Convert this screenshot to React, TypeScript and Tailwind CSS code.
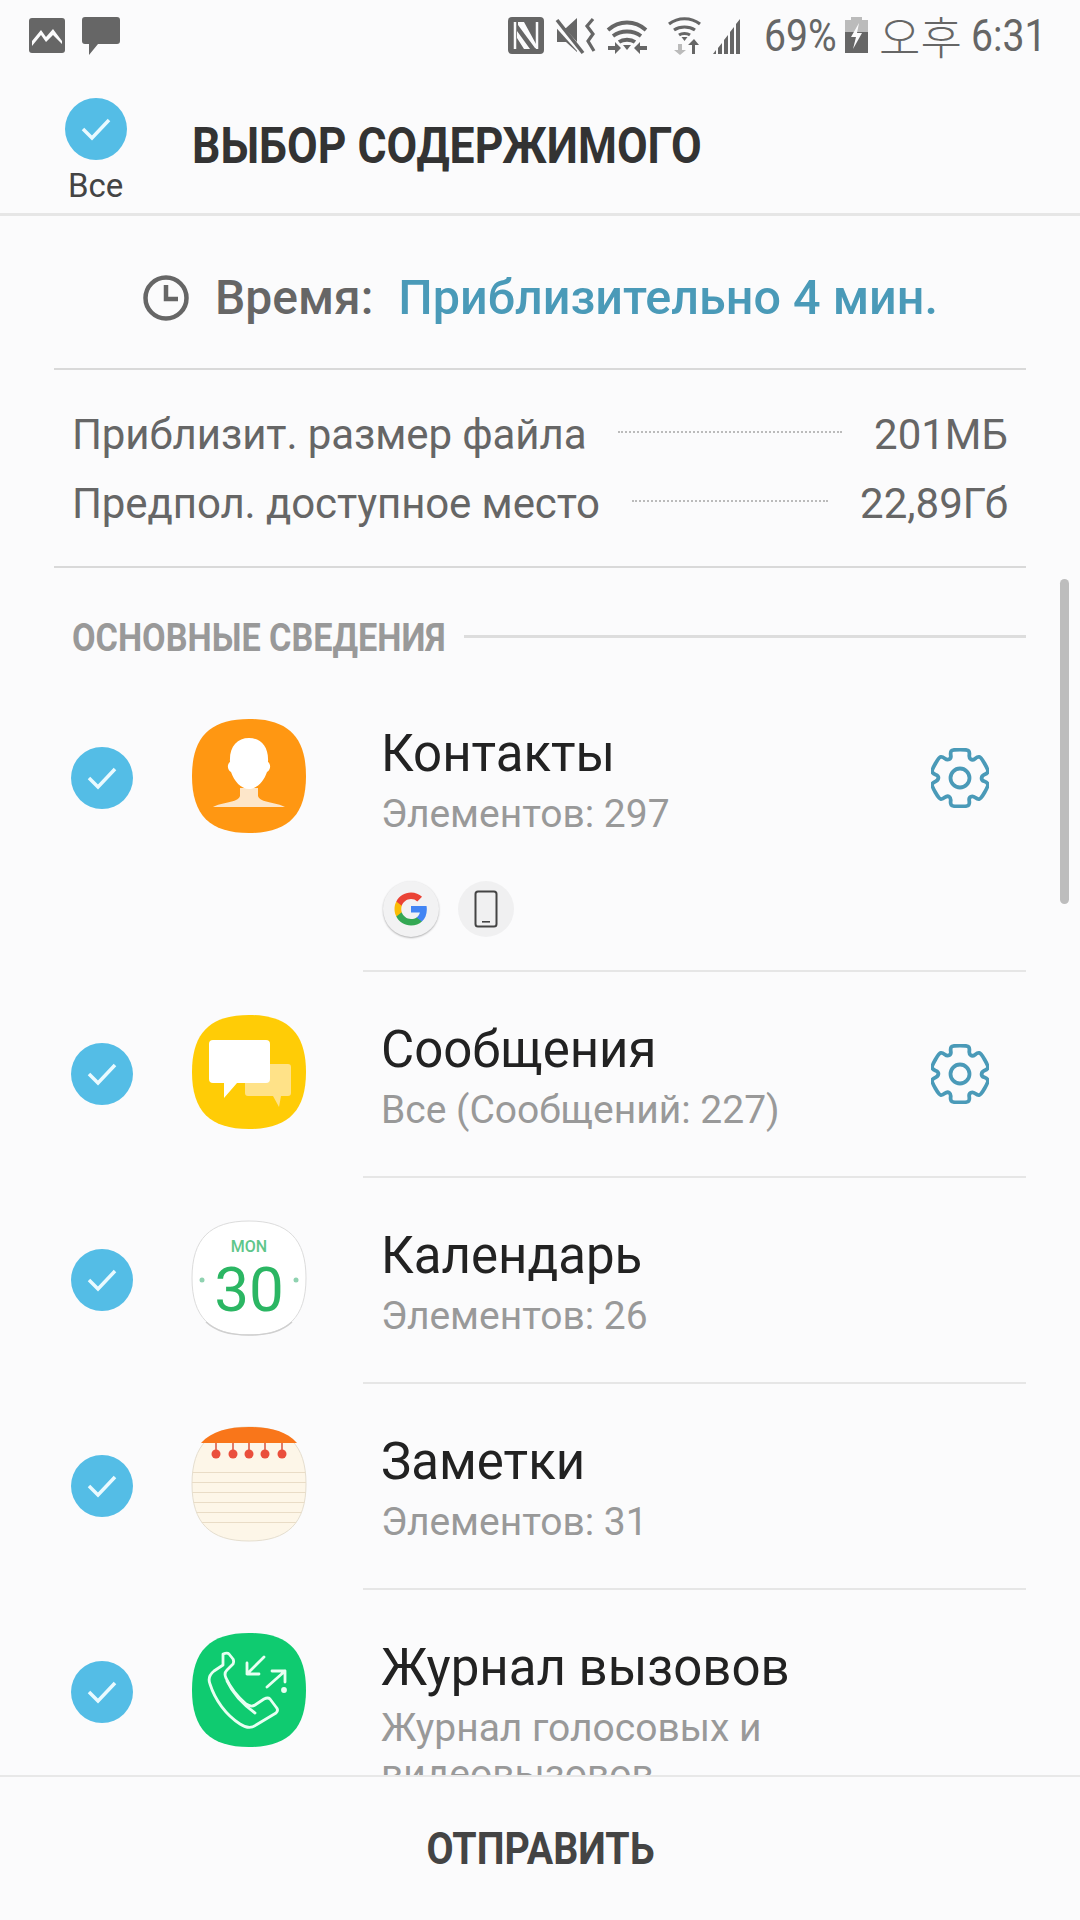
import React from "react";

const SQ = "M57 0C96 0 114 18 114 57C114 96 96 114 57 114C18 114 0 96 0 57C0 18 18 0 57 0Z";

function Check({ size = 62 }: { size?: number }) {
  return (
    <div className="rounded-full bg-[#54bde6] flex items-center justify-center shrink-0" style={{ width: size, height: size }}>
      <svg width="32" height="26" viewBox="0 0 32 26" fill="none">
        <path d="M3 13l9 9L29 4" stroke="#eafaff" strokeWidth="3.500" />
      </svg>
    </div>
  );
}

function gearPath() {
  const cx = 29;
  const cy = 30;
  const pts: [number, number][] = [];
  for (let i = 0; i < 6; i++) {
    const a = -Math.PI / 2 + (i * Math.PI) / 3;
    const add = (d: number, r: number) => pts.push([cx + r * Math.cos(a + d), cy + r * Math.sin(a + d)]);
    add(-0.36, 27.500);
    add(-0.26, 29.500);
    add(0.26, 29.500);
    add(0.36, 27.500);
    add(0.42, 22);
    add(0.627, 21.500);
  }
  const mid = (p: [number, number], q: [number, number]) => [(p[0] + q[0]) / 2, (p[1] + q[1]) / 2];
  const start = mid(pts[pts.length - 1], pts[0]);
  let d = `M${start[0].toFixed(2)} ${start[1].toFixed(2)}`;
  pts.forEach((p, i) => {
    const m = mid(p, pts[(i + 1) % pts.length]);
    d += `Q${p[0].toFixed(2)} ${p[1].toFixed(2)} ${m[0].toFixed(2)} ${m[1].toFixed(2)}`;
  });
  return d + "Z";
}

function Gear() {
  return (
    <svg width="58" height="60" viewBox="0 0 58 60" fill="none" stroke="#4a9ab8" strokeWidth="3.800" strokeLinejoin="round">
      <circle cx="29" cy="30" r="9.500" />
      <path d={gearPath()} />
    </svg>
  );
}

function ContactsIcon() {
  return (
    <svg width="114" height="114" viewBox="0 0 114 114">
      <path d={SQ} fill="#ff9712" />
      <path d="M21 88c8-5 25-4 27-11v-8h18v8c2 7 19 6 27 11Z" fill="#fde6c9" />
      <path d="M57 19c-12 0-20 9-19 24-3 2-3 8 1 10 3 9 10 17 18 17s15-8 18-17c4-2 4-8 1-10 1-15-7-24-19-24Z" fill="#fff" />
    </svg>
  );
}

function MessagesIcon() {
  return (
    <svg width="114" height="114" viewBox="0 0 114 114">
      <path d={SQ} fill="#ffcc06" />
      <path d="M56 49h40a3 3 0 0 1 3 3v26a3 3 0 0 1-3 3h-7l-2 11-6-11H56a3 3 0 0 1-3-3V52a3 3 0 0 1 3-3Z" fill="#ffe288" />
      <path d="M21 25h53a4 4 0 0 1 4 4v35a4 4 0 0 1-4 4H45L32 83V68H21a4 4 0 0 1-4-4V29a4 4 0 0 1 4-4Z" fill="#fff" />
    </svg>
  );
}

function CalendarIcon() {
  return (
    <svg width="114" height="114" viewBox="0 0 114 114" style={{ overflow: "visible" }}>
      <path d={SQ} fill="#fff" stroke="#dcdcdc" strokeWidth="1" />
      <path d="M14 101c10 9 22 13 43 13s33-4 43-13" fill="none" stroke="#cfcfcf" strokeWidth="1.500" />
      <text x="57" y="31" textAnchor="middle" fontFamily="Roboto, sans-serif" fontSize="16" fontWeight="500" fill="#5fc68a">MON</text>
      <text x="57" y="90" textAnchor="middle" fontFamily="Roboto, sans-serif" fontSize="62" fontWeight="400" fill="#2bb663">30</text>
      <circle cx="10" cy="59" r="2.500" fill="#8fd2b0" />
      <circle cx="104" cy="59" r="2.500" fill="#8fd2b0" />
    </svg>
  );
}

function NotesIcon() {
  return (
    <svg width="114" height="114" viewBox="0 0 114 114" style={{ overflow: "visible" }}>
      <defs>
        <clipPath id="notes-clip">
          <path d={SQ} />
        </clipPath>
      </defs>
      <path d={SQ} fill="#fdf6e8" stroke="#e5decf" strokeWidth="1" />
      <path d="M9 16C20 4 36 0 57 0s37 4 48 16Z" fill="#f9761a" />
      {[24, 41, 57, 73, 90].map((x) => (
        <g key={x}>
          <rect x={x - 0.7} y="16" width="1.400" height="10" fill="#d5482f" />
          <circle cx={x} cy="27" r="4.500" fill="#ea4f3c" />
        </g>
      ))}
      <g clipPath="url(#notes-clip)">
        {[45, 55, 65, 75, 85, 95].map((y) => (
          <rect key={y} x="0" y={y} width="114" height="1" fill="#e9dcc6" />
        ))}
      </g>
    </svg>
  );
}

function CallIcon() {
  return (
    <svg width="114" height="114" viewBox="0 0 114 114" fill="none" stroke="#e8fff2" strokeWidth="2.800" strokeLinejoin="round" strokeLinecap="round">
      <path d={SQ} fill="#0fcb70" stroke="none" />
      <g transform="translate(0 4)">
        <path d="M31 28l-9 6c-5 4-6 8-4 13 5 16 16 31 30 40 6 4 11 5 16 1l20-12c2-2 2-4 0-6l-6-8c-2-2-4-1-6 0l-9 6c-3 2-6 1-9-1-9-8-15-15-20-26-2-4-1-6 1-8l6-6c1-2 1-3 0-5l-4-5c-1-1-3-1-6 0Z" />
        <path d="M35 44c6 13 14 22 28 32" />
      </g>
      <path d="M55 41L72 24M55 41V30M55 41h12M75 54l18-16M93 38H80M93 38v11" />
      <circle cx="92" cy="57" r="1.500" fill="#e8fff2" />
    </svg>
  );
}

function GoogleG() {
  return (
    <svg width="36" height="36" viewBox="0 0 48 48">
      <path fill="#4285F4" d="M45.100 24.500c0-1.600-.1-3.100-.4-4.600H24v8.700h11.800c-.5 2.700-2 5-4.400 6.600v5.500h7.100c4.200-3.800 6.600-9.500 6.600-16.200Z" />
      <path fill="#34A853" d="M24 46c5.900 0 10.900-2 14.500-5.300l-7.100-5.500c-2 1.300-4.500 2.100-7.400 2.100-5.700 0-10.500-3.800-12.300-9H4.400v5.700C8 41.100 15.400 46 24 46Z" />
      <path fill="#FBBC05" d="M11.700 28.300c-.4-1.300-.7-2.800-.7-4.300s.3-3 .7-4.300V14H4.400C2.900 17 2 20.400 2 24s.9 7 2.400 10l7.300-5.700Z" />
      <path fill="#EA4335" d="M24 10.700c3.200 0 6.100 1.100 8.400 3.300l6.300-6.300C34.900 4.200 29.900 2 24 2 15.400 2 8 6.900 4.400 14l7.300 5.700c1.800-5.200 6.600-9 12.300-9Z" />
    </svg>
  );
}

function PhoneIcon() {
  return (
    <svg width="24" height="38" viewBox="0 0 24 38" fill="none">
      <rect x="1.500" y="1.500" width="21" height="35" rx="2.500" stroke="#444" strokeWidth="2" />
      <rect x="8" y="31" width="8" height="1.600" fill="#444" />
    </svg>
  );
}

function StatusIcons() {
  return (
    <svg width="242" height="38" viewBox="0 0 242 38" fill="#666" className="shrink-0">
      {/* NFC */}
      <rect x="0" y="0" width="36" height="37" rx="4" />
      <path d="M7 5v27M29 5v27" stroke="#fbfbfc" strokeWidth="2.500" />
      <path d="M10 5h6l12 22v4h-1L10 8ZM9 14l13 18h-6L9 21Z" fill="#fbfbfc" />
      {/* Mute */}
      <path d="M49 11h9l11-10v34l-11-10h-9Z" />
      <path d="M47 5l27 30" stroke="#fbfbfc" strokeWidth="6" />
      <path d="M49 3l26 33" stroke="#666" strokeWidth="3.500" />
      <path d="M85 2l-6 7 6 8-5 7 6 10" fill="none" stroke="#666" strokeWidth="3.200" />
      {/* Wifi with arrows */}
      <g fill="none" stroke="#666" strokeWidth="3.800">
        <path d="M100 13c11-10 27-10 38 0" />
        <path d="M105 19c8-6 20-6 28 0" />
        <path d="M111 25c4-3 12-3 16 0" />
      </g>
      <path d="M119 33l-4-5h8Z" />
      <path d="M100 29h7v-4l6 6-6 6v-4h-7ZM139 29h-7v-4l-6 6 6 6v-4h7Z" />
      {/* Wifi 2 */}
      <g fill="none" stroke="#666" strokeWidth="3.200">
        <path d="M161 7c9-7 22-7 31 0" />
        <path d="M166 13c6-4 15-4 21 0" />
        <path d="M171 18c3-2 8-2 11 0" />
      </g>
      <path d="M176.500 24l-3-4h6Z" />
      <path d="M170 27v6h-4l6 5 6-5h-4v-6Z" fill="#bbb" />
      <path d="M187 37v-9h4l-5-6-6 6h4v9Z" />
      {/* Signal */}
      <path d="M205 37l3-4v4ZM210 37v-6l4-5v11ZM216 37V23l4-5v19ZM222 37V15l4-5v27ZM228 37V7l4-5v35Z" />
    </svg>
  );
}

function Battery() {
  return (
    <svg width="23" height="36" viewBox="0 0 23 36" className="shrink-0">
      <rect x="6" y="0" width="11" height="4" fill="#bbb" />
      <rect x="0" y="3" width="23" height="12" fill="#bbb" />
      <rect x="0" y="15" width="23" height="21" fill="#666" />
      <path d="M14 6L6 20h5l-3 12 9-16h-5Z" fill="#fbfbfc" />
    </svg>
  );
}

type Row = { title: string; sub: string; icon: React.ReactNode; gear?: boolean; chips?: boolean };

const rows: Row[] = [
  { title: "Контакты", sub: "Элементов: 297", icon: <ContactsIcon />, gear: true, chips: true },
  { title: "Сообщения", sub: "Все (Сообщений: 227)", icon: <MessagesIcon />, gear: true },
  { title: "Календарь", sub: "Элементов: 26", icon: <CalendarIcon /> },
  { title: "Заметки", sub: "Элементов: 31", icon: <NotesIcon /> },
  { title: "Журнал вызовов", sub: "Журнал голосовых и видеовызовов", icon: <CallIcon /> },
];

function Item({ r, last }: { r: Row; last: boolean }) {
  return (
    <div className={r.chips ? "h-[296px] relative" : "h-[206px] relative"}>
      <div className="flex h-[206px] items-center">
        <div className="w-[192px] pl-[71px] pt-[3px] shrink-0">
          <Check />
        </div>
        <div className="w-[189px] shrink-0">{r.icon}</div>
        <div className="w-[480px] h-[110px] pt-[3px]">
          <div className="text-[51px] leading-[60px] text-[#222]">{r.title}</div>
          <div className="text-[39px] leading-[46px] text-[#999] mt-[7px]">{r.sub}</div>
        </div>
        {r.gear && (
          <div className="absolute left-[931px] top-[75px]">
            <Gear />
          </div>
        )}
      </div>
      {r.chips && (
        <div className="flex gap-[19px] ml-[383px] mt-[2px]">
          <div className="w-[56px] h-[56px] rounded-full bg-[#f2f2f3] shadow-[0_1px_2px_rgba(0,0,0,0.3)] flex items-center justify-center">
            <GoogleG />
          </div>
          <div className="w-[56px] h-[56px] rounded-full bg-[#f0f0f1] flex items-center justify-center">
            <PhoneIcon />
          </div>
        </div>
      )}
      {!last && <div className="absolute left-[363px] right-[54px] -bottom-[3px] h-[2px] bg-[#e6e6e6]" />}
    </div>
  );
}

export default function App() {
  return (
    <div className="w-[1080px] h-[1920px] bg-[#fbfbfc] flex flex-col overflow-hidden font-['Roboto',sans-serif]">
      <div className="h-[70px] shrink-0 flex items-start pt-[17px] pl-[29px]">
        <svg width="36" height="37" viewBox="0 0 36 37" className="shrink-0">
          <rect x="0" y="1" width="36" height="35" rx="3" fill="#666" />
          <path d="M3 24l9-11 5 7 7-8 9 12v3l-9-9-7 7-5-7-9 11Z" fill="#fbfbfc" />
        </svg>
        <svg className="ml-[17px] shrink-0" width="38" height="38" viewBox="0 0 38 38" fill="#666">
          <path d="M3 0h32a3 3 0 0 1 3 3v21a3 3 0 0 1-3 3H16l-9 11V27H3a3 3 0 0 1-3-3V3a3 3 0 0 1 3-3Z" />
        </svg>
        <div className="ml-[388px] shrink-0">
          <StatusIcons />
        </div>
        <div className="ml-[14px] w-[72px] shrink-0 text-[45px] leading-[38px] text-[#666] scale-x-[0.87] origin-left whitespace-nowrap">
          69%
        </div>
        <div className="ml-[9px] shrink-0">
          <Battery />
        </div>
        <div className="ml-[11px] w-[81px] shrink-0 text-[45px] leading-[38px] text-[#666] whitespace-nowrap font-['Noto_Sans_CJK_KR',sans-serif] font-light">
          오후
        </div>
        <div className="ml-[11px] shrink-0 text-[45px] leading-[38px] text-[#666] scale-x-[0.87] origin-left whitespace-nowrap">
          6:31
        </div>
      </div>

      <div className="h-[146px] shrink-0 flex border-b-[3px] border-[#e6e6e6]">
        <div className="w-[192px] shrink-0 flex flex-col">
          <div className="pl-[65px] pt-[28px]">
            <Check />
          </div>
          <div className="pl-[68px] text-[33px] leading-[36px] text-[#444] mt-[8px]">Все</div>
        </div>
        <div className="pt-[20px] text-[50px] leading-[56px] font-bold text-[#333] whitespace-nowrap scale-x-[0.89] origin-left self-start mt-[28px]">
          ВЫБОР СОДЕРЖИМОГО
        </div>
      </div>

      <div className="flex-1 min-h-0 overflow-hidden relative">
        <div className="flex items-center h-[154px] pt-[12px] pl-[89px] mx-[54px] border-b-2 border-[#d9d9d9]">
          <svg width="46" height="46" viewBox="0 0 46 46" fill="none" stroke="#666" strokeWidth="4.500" className="shrink-0">
            <circle cx="23" cy="23" r="20.500" />
            <path d="M23 10v14h12" />
          </svg>
          <span className="ml-[26px] text-[48px] font-medium text-[#666] whitespace-nowrap">Время:</span>
          <span className="ml-[25px] text-[48.500px] font-medium text-[#4a9ab8] whitespace-nowrap">Приблизительно 4 мин.</span>
        </div>

        <div className="mx-[54px] h-[198px] border-b-2 border-[#d9d9d9] px-[18px] pt-[37px] text-[42px] leading-[56px] text-[#666]">
          <div className="flex items-center">
            <span className="tracking-[-0.1px]">Приблизит. размер файла</span>
            <span className="flex-1 mx-[32px] border-t-2 border-dotted border-[#bbb] -mt-[6px]" />
            <span>201МБ</span>
          </div>
          <div className="flex items-center mt-[13px]">
            <span className="tracking-[-0.1px]">Предпол. доступное место</span>
            <span className="flex-1 mx-[32px] border-t-2 border-dotted border-[#bbb] -mt-[6px]" />
            <span>22,89Гб</span>
          </div>
        </div>

        <div className="flex items-center ml-[72px] mr-[54px] mt-[36px] h-[69px]">
          <span className="w-[392px] shrink-0 text-[38px] font-bold text-[#999] whitespace-nowrap scale-x-[0.9] origin-left">
            ОСНОВНЫЕ СВЕДЕНИЯ
          </span>
          <span className="flex-1 h-[3px] bg-[#ddd] -mt-[4px]" />
        </div>

        <div>
          {rows.map((r, i) => (
            <Item key={r.title} r={r} last={i === rows.length - 1} />
          ))}
        </div>

        <div className="absolute left-[1060px] top-[363px] w-[9px] h-[325px] rounded-full bg-[#bdbdbd]" />
      </div>

      <div className="h-[145px] shrink-0 border-t-2 border-[#e8e8e8] bg-[#fbfbfc] flex items-center justify-center">
        <span className="text-[44px] font-bold text-[#444] whitespace-nowrap scale-x-[0.894]">ОТПРАВИТЬ</span>
      </div>
    </div>
  );
}
